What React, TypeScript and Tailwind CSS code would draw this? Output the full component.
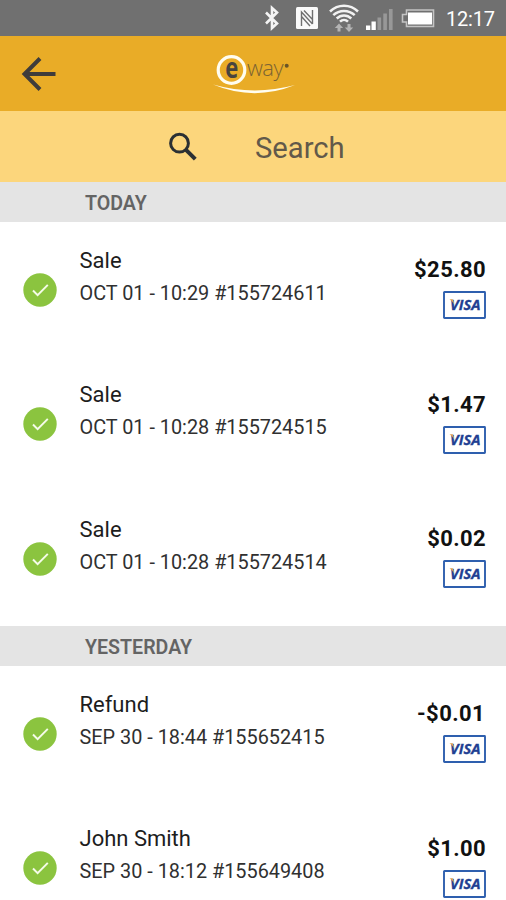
import clsx from "clsx";

type Transaction = {
  title: string;
  details: string;
  amount: string;
};

const sections: { label: string; items: Transaction[] }[] = [
  {
    label: "TODAY",
    items: [
      { title: "Sale", details: "OCT 01 - 10:29 #155724611", amount: "$25.80" },
      { title: "Sale", details: "OCT 01 - 10:28 #155724515", amount: "$1.47" },
      { title: "Sale", details: "OCT 01 - 10:28 #155724514", amount: "$0.02" },
    ],
  },
  {
    label: "YESTERDAY",
    items: [
      { title: "Refund", details: "SEP 30 - 18:44 #155652415", amount: "-$0.01" },
      { title: "John Smith", details: "SEP 30 - 18:12 #155649408", amount: "$1.00" },
    ],
  },
];

function BluetoothIcon() {
  return (
    <svg width="18" height="28" viewBox="0 0 18 28" fill="none" stroke="#f4f4f4" strokeWidth="2.6">
      <path d="M3 8.500 14 19.500l-5 4.500V4l5 4.500L3 19.500" />
    </svg>
  );
}

function NfcIcon() {
  return (
    <svg width="22" height="22" viewBox="0 0 22 22">
      <rect width="22" height="22" rx="1.500" fill="#fafafa" />
      <path d="M5.500 19V5l11 12M16.500 3v14M8 3.500l8.500 9M5.500 9.500l8.500 9.500" fill="none" stroke="#707070" strokeWidth="1.400" />
    </svg>
  );
}

function WifiIcon() {
  return (
    <svg width="32" height="30" viewBox="0 0 32 30" fill="none">
      <g stroke="#f2f2f2" strokeWidth="2.500">
        <path d="M2 8.500C10 .800 22 .800 30 8.500" />
        <path d="M5.300 12.200c6-5.700 15.400-5.700 21.400 0" />
        <path d="M8.700 15.500c4.200-4 10.400-4 14.600 0" />
        <path d="M12 18.700c2.300-2.200 5.700-2.200 8 0" />
      </g>
      <path d="M11 20.500 6.800 25h2.700v3.500h3V25h2.700zM21 29l-4.200-4.500h2.700V21h3v3.500h2.700z" fill="#b4b4b4" />
    </svg>
  );
}

function SignalIcon() {
  return (
    <svg width="28" height="22" viewBox="0 0 28 22">
      <path d="M0 16.500h4.300V21H0zM5.500 12.500h4.300V21H5.500z" fill="#fff" />
      <path d="M11.500 8.500h3.600V21h-3.600zM17.300 4.500h3.600V21h-3.600zM23 0h3.600v21H23z" fill="#989898" />
    </svg>
  );
}

function BatteryIcon() {
  return (
    <svg width="34" height="19" viewBox="0 0 34 19">
      <path d="M5.500 1H32.500V17.500H5.500V13H1.500V5.500H5.500Z" fill="none" stroke="#c4c4c4" strokeWidth="1.600" />
      <rect x="7" y="3.500" width="24" height="12" fill="#fff" />
    </svg>
  );
}

function StatusBar() {
  return (
    <div className="flex h-9 items-center bg-[#707070] pl-[263px] text-white">
      <BluetoothIcon />
      <div className="ml-[15px]">
        <NfcIcon />
      </div>
      <div className="ml-[10px]">
        <WifiIcon />
      </div>
      <div className="mt-[3px] ml-[6px]">
        <SignalIcon />
      </div>
      <div className="ml-[7px]">
        <BatteryIcon />
      </div>
      <span className="mt-[2px] ml-[11px] text-[20px] leading-none tracking-[-0.2px]">12:17</span>
    </div>
  );
}

function Logo() {
  return (
    <svg className="overflow-visible" width="86" height="50" viewBox="0 -6 86 50">
      <circle cx="18.500" cy="17" r="13.300" fill="#e9ac27" stroke="#fffdf0" strokeWidth="3.200" />
      <text
        x="12.200"
        y="24.800"
        className="font-['Open_Sans'] text-[28px] font-bold"
        fill="#47443f"
        textLength="13"
        lengthAdjust="spacingAndGlyphs"
      >
        e
      </text>
      <text x="34" y="23.200" className="font-['Open_Sans'] text-[22px] font-light" fill="#7d6432" textLength="36.500">
        way
      </text>
      <circle cx="73.700" cy="12.800" r="2" fill="#6a5426" />
      <path d="M0 31.500Q41 43 82 32Q41 48.500 0 31.500Z" fill="#fffdf0" />
    </svg>
  );
}

function Header() {
  return (
    <div className="flex h-[75px] items-center bg-[#e9ac27]">
      <svg className="ml-[21px]" width="36" height="34" viewBox="0 0 36 34" fill="none" stroke="#3f3c3b" strokeWidth="4">
        <path d="M34.500 17H4M19 1.500 3.500 17 19 32.500" />
      </svg>
      <div className="mb-[3px] ml-[156px]">
        <Logo />
      </div>
    </div>
  );
}

function SearchBar() {
  return (
    <div className="flex h-[70.500px] items-center bg-[#fcd67c]">
      <svg className="mt-px ml-[168px]" width="30" height="30" viewBox="0 0 30 30" fill="none" stroke="#2b3033">
        <circle cx="11.500" cy="11.200" r="8.900" strokeWidth="3" />
        <path d="m18 17.800 9.300 9.300" strokeWidth="4" />
      </svg>
      <span className="mt-[4px] ml-[57px] text-[29.200px] leading-none text-[#62594a]">Search</span>
    </div>
  );
}

function VisaBadge() {
  return (
    <svg width="43" height="28" viewBox="0 0 43 28">
      <rect x="1" y="1" width="41" height="26" rx="0.500" fill="#fff" stroke="#2e5fae" strokeWidth="1.900" />
      <text
        x="7"
        y="18.900"
        className="font-['Open_Sans'] text-[14.500px] font-bold italic"
        fill="#213f92"
        stroke="#213f92"
        strokeWidth="0.300"
        textLength="30.500"
        lengthAdjust="spacingAndGlyphs"
      >
        VISA
      </text>
      <path d="M6.500 8.300h3q1.200 1 1.400 5-1.200-3.500-4.400-5Z" fill="#e7a750" />
    </svg>
  );
}

function TransactionRow({ title, details, amount }: Transaction) {
  return (
    <div className="flex h-[134.600px] items-start">
      <svg className="mt-[50.500px] ml-[23px] shrink-0" width="34" height="34" viewBox="0 0 34 34">
        <circle cx="17" cy="17" r="16.700" fill="#8bc43f" />
        <path d="m10 17.500 4.600 4.600 10.200-10.200" fill="none" stroke="#f5fbe9" strokeWidth="2" />
      </svg>
      <div className="mt-[25.500px] ml-[22.500px] flex flex-col text-[#1d1d1d]">
        <span className="text-[22px] leading-[26px]">{title}</span>
        <span className="mt-[8px] text-[19.850px] leading-6 text-[#303030]">{details}</span>
      </div>
      <div className="mt-[35px] mr-5 ml-auto flex flex-col items-end">
        <span
          className={clsx(
            "text-[22px] leading-[26px] font-bold tracking-[0.4px] text-[#111]",
            amount.startsWith("-") && "mr-px",
          )}
        >
          {amount}
        </span>
        <div className="mt-[8px]">
          <VisaBadge />
        </div>
      </div>
    </div>
  );
}

export default function App() {
  return (
    <div className="h-[900px] w-[506px] overflow-hidden bg-white font-[Roboto,sans-serif]">
      <StatusBar />
      <Header />
      <SearchBar />
      {sections.map((section) => (
        <div key={section.label}>
          <div className="flex h-[40.500px] items-center bg-[#e4e4e4] pt-[4px] pl-[85px] text-[19.600px] font-semibold text-[#646464]">
            {section.label}
          </div>
          {section.items.map((item) => (
            <TransactionRow key={item.details} {...item} />
          ))}
        </div>
      ))}
    </div>
  );
}
